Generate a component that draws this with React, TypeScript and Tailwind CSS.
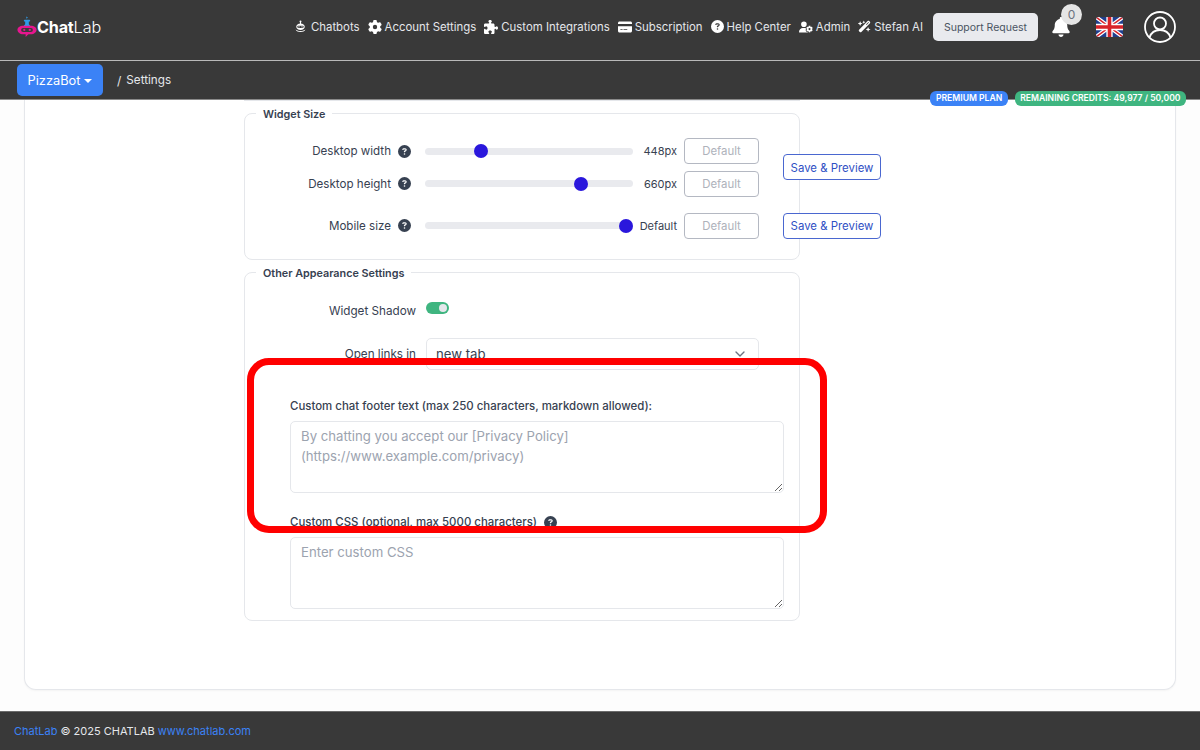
import React from "react";
import { FaGear, FaPuzzlePiece, FaCreditCard, FaCircleQuestion, FaUserGear, FaWandMagicSparkles, FaBell } from "react-icons/fa6";
import { LuChevronDown } from "react-icons/lu";

function RobotIcon() {
  return (
    <svg width="11" height="13" viewBox="0 0 22 26" fill="white">
      <circle cx="11" cy="3" r="2" />
      <rect x="10" y="3" width="2" height="5" />
      <path d="M11 7c-5 0-8.500 3-8.500 6.500S6 20 11 20s8.500-3 8.500-6.500S16 7 11 7zm-4 4.500h8c1.500 0 2.500 1 2.500 2.200S16.500 16 15 16H7c-1.500 0-2.500-1-2.500-2.300S5.500 11.500 7 11.500z" />
      <circle cx="8" cy="13.700" r="1.300" />
      <circle cx="14" cy="13.700" r="1.300" />
      <path d="M1 19c2 3.500 5.500 5 10 5s8-1.500 10-5c-2 1.800-5.500 3-10 3S3 20.800 1 19z" />
    </svg>
  );
}

function Logo() {
  return (
    <div className="flex items-center">
      <svg width="20" height="22" viewBox="0 0 44 48">
        <path d="M20 1l4 2-3 3z" fill="#2f9be8" />
        <rect x="15" y="8" width="14" height="4" rx="2" fill="#2f9be8" />
        <path d="M18 11h8v7l8 9H10l8-9z" fill="#2f9be8" />
        <path d="M14 21h16c8 0 13 4 13 9s-5 10-13 10h-5l-6 6v-6h-5C6 40 1 35 1 30s5-9 13-9z" fill="#e6168f" />
        <rect x="9" y="26" width="26" height="9" rx="4.500" fill="#3a3a3a" />
        <circle cx="16" cy="30.500" r="2.500" fill="#e6168f" />
        <circle cx="28" cy="30.500" r="2.500" fill="#e6168f" />
      </svg>
      <span className="text-[16.200px] font-bold text-white tracking-[-0.2px] leading-none">Chat</span>
      <span className="text-[16.200px] font-light text-white leading-none">Lab</span>
    </div>
  );
}

function UkFlag() {
  return (
    <svg width="27" height="20" viewBox="0 0 60 44" className="rounded-[3px]">
      <rect width="60" height="44" fill="#1f3f8f" />
      <path d="M0 0L60 44M60 0L0 44" stroke="#fff" strokeWidth="9" />
      <path d="M0 0L60 44M60 0L0 44" stroke="#d8232a" strokeWidth="3.500" />
      <path d="M30 0V44M0 22H60" stroke="#fff" strokeWidth="14" />
      <path d="M30 0V44M0 22H60" stroke="#d8232a" strokeWidth="8" />
    </svg>
  );
}

function ProfileIcon() {
  return (
    <svg width="32" height="32" viewBox="0 0 32 32" fill="none" stroke="white" strokeWidth="1.800" className="ml-[21px]">
      <circle cx="16" cy="16" r="15" />
      <circle cx="16" cy="12.500" r="6" />
      <path d="M5.500 26.500c1.500-4.500 5.500-7.500 10.500-7.500s9 3 10.500 7.500" />
    </svg>
  );
}

function NavItem({ icon, label }: { icon: React.ReactNode; label: string }) {
  return (
    <a className="flex items-center gap-[3px] text-[11.400px] text-[#e5e7eb] whitespace-nowrap">
      {icon}
      <span className="pt-[2px]">{label}</span>
    </a>
  );
}

function Help() {
  return <FaCircleQuestion className="text-[13px] text-[#374151] shrink-0" />;
}

function SliderRow({ label, value, pos }: { label: string; value: string; pos: number }) {
  return (
    <div className="flex items-center h-[26px]">
      <span className="w-[146px] pt-[2px] text-right text-[11.600px] text-[#374151] whitespace-nowrap">{label}</span>
      <span className="ml-[7px] w-[13px] flex"><Help /></span>
      <input
        type="range"
        min={0}
        max={1000}
        defaultValue={pos}
        className="ml-[14px] w-[208px] h-[7px] rounded-full appearance-none bg-[#e9eaee] [&::-webkit-slider-thumb]:appearance-none [&::-webkit-slider-thumb]:w-[14px] [&::-webkit-slider-thumb]:h-[14px] [&::-webkit-slider-thumb]:rounded-full [&::-webkit-slider-thumb]:bg-[#2a17dc]"
      />
      <span className="w-[44px] pt-[1px] text-right text-[11px] text-[#374151] whitespace-nowrap">{value}</span>
      <button className="ml-[7px] w-[75px] h-[26px] pt-[2px] rounded-[4px] border border-[#b4b8c2] text-[11.400px] text-[#aeb2bb]">Default</button>
    </div>
  );
}

function SaveButton() {
  return (
    <button className="shrink-0 w-[98px] h-[26px] pt-[2px] rounded-[4px] border border-[#4a67d0] bg-white text-[11.400px] text-[#2f4fc4] whitespace-nowrap">
      Save &amp; Preview
    </button>
  );
}

const fieldsetCls = "w-[556px] min-w-0 border border-[#e5e7eb] rounded-[8px] p-0";
const legendCls = "ml-[11px] px-[7px] pt-[3px] text-[10.800px] font-semibold text-[#374151] leading-[14px]";
const areaCls =
  "block w-[494px] h-[72px] rounded-[5px] border border-[#e5e7eb] px-[10px] py-[4px] text-[13.200px] leading-[20px] bg-white placeholder:text-[#9ca3af] outline-none";

export default function App() {
  return (
    <div className="relative h-[750px] overflow-hidden flex flex-col bg-[#fdfdfd] font-['Inter',sans-serif]">
      <header className="h-[61px] shrink-0 flex items-center justify-between bg-[#393939] border-b border-[#b9b9b9] pl-[17px] pr-[24px] pb-[6px]">
        <Logo />
        <div className="flex items-center">
          <nav className="flex items-center gap-[8px]">
            <NavItem icon={<span className="mr-[2px] flex"><RobotIcon /></span>} label="Chatbots" />
            <NavItem icon={<FaGear className="text-[14px] text-white" />} label="Account Settings" />
            <NavItem icon={<FaPuzzlePiece className="text-[14px] text-white" />} label="Custom Integrations" />
            <NavItem icon={<FaCreditCard className="text-[14px] text-white" />} label="Subscription" />
            <NavItem icon={<FaCircleQuestion className="text-[13px] text-white" />} label="Help Center" />
            <NavItem icon={<FaUserGear className="text-[14px] text-white" />} label="Admin" />
            <NavItem icon={<FaWandMagicSparkles className="text-[13px] text-white" />} label="Stefan AI" />
          </nav>
          <button className="ml-[10px] w-[105px] h-[28px] pt-[1px] rounded-[5px] bg-[#e9eaee] text-[10.500px] text-[#4b5563] whitespace-nowrap">Support Request</button>
          <div className="relative ml-[13px] w-[20px] flex justify-center">
            <FaBell className="text-[20px] text-white" />
            <span className="absolute left-[10px] top-[-13px] w-[21px] h-[21px] rounded-full bg-[#e5e5e5] text-[12px] text-[#6b7280] flex items-center justify-center">0</span>
          </div>
          <span className="ml-[25px] flex"><UkFlag /></span>
          <ProfileIcon />
        </div>
      </header>
      <div className="h-[39px] shrink-0 flex items-center bg-[#393939] border-b border-[#8a8a8a] pl-[17px]">
        <button className="w-[86px] h-[32px] pt-[1px] rounded-[5px] bg-[#3b82f6] text-[12.800px] text-white flex items-center justify-center gap-[4px]">
          PizzaBot
          <span className="w-0 h-0 border-x-[4px] border-x-transparent border-t-[4px] border-t-white" />
        </button>
        <span className="ml-[14px] pt-[2px] text-[12px] text-[#e5e7eb]">/</span>
        <span className="ml-[5px] pt-[2px] text-[11.700px] text-[#e5e7eb]">Settings</span>
      </div>

      <main className="flex-1 min-h-0 px-[24px] pb-[21px]">
        <div className="h-full bg-white border-x border-b border-[#e5e7eb] rounded-b-[12px] pl-[219px] shadow-[0_1px_2px_rgba(0,0,0,0.04)]">
          <div className="w-[556px] h-[1px] bg-[#e5e7eb]" />
          <fieldset className={`${fieldsetCls} mt-[4px] h-[155px]`}>
            <legend className={legendCls}>Widget Size</legend>
            <div className="flex items-center gap-[24px] mt-[16px] w-[700px]">
              <div className="flex flex-col gap-[6.500px]">
                <SliderRow label="Desktop width" value="448px" pos={253} />
                <SliderRow label="Desktop height" value="660px" pos={768} />
              </div>
              <SaveButton />
            </div>
            <div className="flex items-center gap-[24px] mt-[16px] w-[700px]">
              <SliderRow label="Mobile size" value="Default" pos={1000} />
              <SaveButton />
            </div>
          </fieldset>
          <fieldset className={`${fieldsetCls} mt-[4px] h-[357px]`}>
            <legend className={legendCls}>Other Appearance Settings</legend>
            <div className="flex items-center h-[16px] mt-[22px]">
              <span className="w-[171px] pt-[1px] text-right text-[11.700px] text-[#374151]">Widget Shadow</span>
              <span className="ml-[10px] w-[23px] h-[12px] mb-[7px] rounded-full bg-[#3fb580] flex items-center justify-end pr-[2px]">
                <span className="w-[8px] h-[8px] rounded-full bg-[#e5e7eb]" />
              </span>
            </div>
            <div className="flex items-center mt-[19px]">
              <span className="w-[171px] pt-[1px] text-right text-[11.700px] text-[#374151]">Open links in</span>
              <div className="ml-[10px] w-[333px] h-[32px] rounded-[5px] border border-[#e5e7eb] flex items-center justify-between pl-[9px] pr-[10px]">
                <span className="pt-[2px] text-[13.200px] text-[#374151]">new tab</span>
                <LuChevronDown className="text-[16px] text-[#6b7280]" />
              </div>
            </div>
            <div className="ml-[45px] mt-[28px]">
              <label className="block text-[11.440px] font-medium text-[#374151] leading-[16px] mb-[7px]">
                Custom chat footer text (max 250 characters, markdown allowed):
              </label>
              <textarea className={areaCls} placeholder={"By chatting you accept our [Privacy Policy]\n(https://www.example.com/privacy)"} />
              <label className="flex items-center gap-[7px] text-[11.440px] font-medium text-[#374151] leading-[16px] mt-[21px] mb-[7px]">
                Custom CSS (optional, max 5000 characters)
                <Help />
              </label>
              <textarea className={areaCls} placeholder="Enter custom CSS" />
            </div>
          </fieldset>
        </div>
      </main>

      <footer className="h-[39px] shrink-0 bg-[#393939] border-t border-[#6b6b6b] flex items-center pl-[14px] text-[11px] text-[#e5e7eb] gap-[3px]">
        <a className="text-[#3b82f6]">ChatLab</a>
        <span>© 2025 CHATLAB</span>
        <a className="text-[#3b82f6]">www.chatlab.com</a>
      </footer>

      <div className="absolute right-[14px] top-[91px] flex gap-[7px]">
        <span className="h-[15px] px-[5.500px] rounded-[6px] bg-[#3b82f6] text-[8.600px] font-semibold text-white flex items-center whitespace-nowrap">PREMIUM PLAN</span>
        <span className="h-[15px] px-[5.500px] rounded-[6px] bg-[#3fb580] text-[8.600px] font-semibold text-white flex items-center whitespace-nowrap">REMAINING CREDITS: 49,977 / 50,000</span>
      </div>

      <div className="absolute left-[247px] top-[358px] w-[580px] h-[175px] border-[7px] border-[#ff0000] rounded-[22px] pointer-events-none" />
    </div>
  );
}
